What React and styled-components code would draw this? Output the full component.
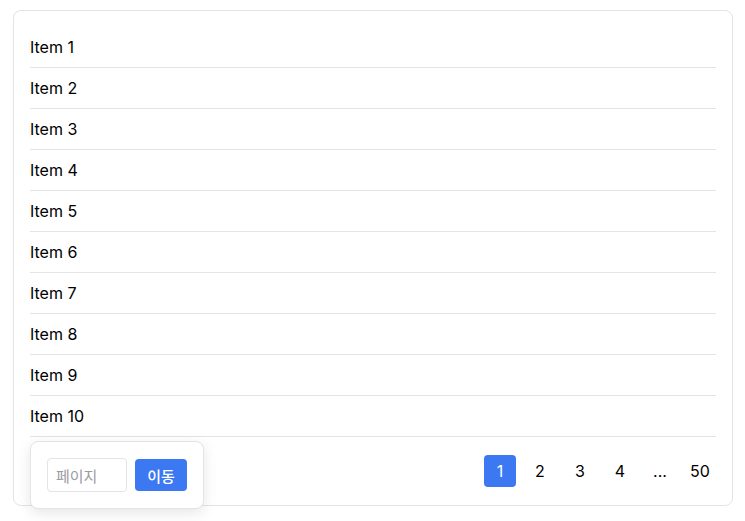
import React from "react";
import styled, { createGlobalStyle } from "styled-components";

const GlobalStyle = createGlobalStyle`
  body {
    margin: 0;
    background: #ffffff;
    font-family: Inter, "Noto Sans CJK KR", sans-serif;
    color: #000000;
  }
`;

const Page = styled.div`
  min-height: 100vh;
  box-sizing: border-box;
  padding: 10px 13px 0 13px;
`;

const Card = styled.div`
  position: relative;
  border: 1px solid #e3e3e8;
  border-radius: 8px;
  padding: 16px 16px 18px 16px;
  width: 720px;
  box-sizing: border-box;
`;

const List = styled.ul`
  list-style: none;
  margin: 0;
  padding: 0;
`;

const Row = styled.li`
  height: 40px;
  display: flex;
  align-items: center;
  font-size: 16px;
  border-bottom: 1px solid #e3e3e8;
`;

const Footer = styled.div`
  display: flex;
  justify-content: flex-end;
  margin-top: 18px;
`;

const Pages = styled.div`
  display: flex;
  gap: 8px;
`;

const PageButton = styled.button`
  width: 32px;
  height: 32px;
  border: none;
  border-radius: 4px;
  padding: 0;
  font-family: Inter, sans-serif;
  font-size: 16px;
  background: ${(p) => (p.$active ? "#3b78f1" : "transparent")};
  color: ${(p) => (p.$active ? "#ffffff" : "#000000")};
  display: flex;
  align-items: center;
  justify-content: center;
`;

const JumpPopup = styled.div`
  position: absolute;
  left: 16px;
  top: 430px;
  display: flex;
  gap: 8px;
  align-items: center;
  padding: 16px;
  background: #ffffff;
  border: 1px solid #e3e3e8;
  border-radius: 8px;
  box-shadow: 0 4px 14px rgba(0, 0, 0, 0.1);
  z-index: 2;
`;

const JumpInput = styled.input`
  width: 80px;
  height: 34px;
  box-sizing: border-box;
  border: 1px solid #e3e3e8;
  border-radius: 4px;
  padding: 0 8px;
  font-family: "Noto Sans CJK KR", sans-serif;
  font-size: 15px;
  &::placeholder {
    color: #9a9aa2;
  }
`;

const JumpButton = styled.button`
  height: 32px;
  width: 52px;
  border: none;
  border-radius: 4px;
  background: #3b78f1;
  color: #ffffff;
  font-family: "Noto Sans CJK KR", sans-serif;
  font-size: 15px;
  font-weight: 500;
  padding: 0;
`;

const items = Array.from({ length: 10 }, (_, i) => `Item ${i + 1}`);
const pages = ["1", "2", "3", "4", "...", "50"];

const App = () => {
  return (
    <Page>
      <GlobalStyle />
      <Card>
        <List>
          {items.map((item) => (
            <Row key={item}>{item}</Row>
          ))}
        </List>
        <Footer>
          <Pages>
            {pages.map((p) => (
              <PageButton key={p} $active={p === "1"}>
                {p}
              </PageButton>
            ))}
          </Pages>
        </Footer>
        <JumpPopup>
          <JumpInput placeholder="페이지" />
          <JumpButton>이동</JumpButton>
        </JumpPopup>
      </Card>
    </Page>
  );
};

export default App;
